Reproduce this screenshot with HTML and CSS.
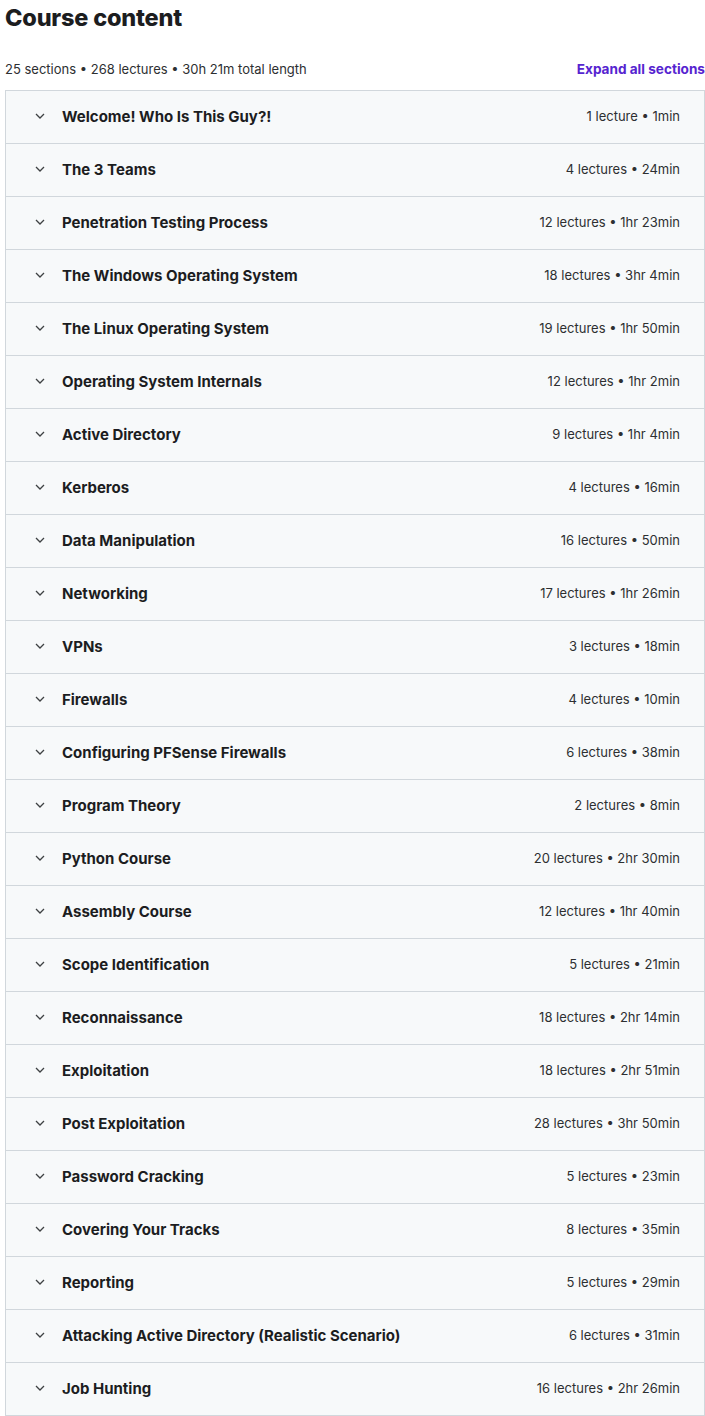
FILE: index.html
```html
<!DOCTYPE html>
<html lang="en">
<head>
    <meta charset="UTF-8">
    <title>Course content</title>
    <link rel="stylesheet" href="styles.css">
</head>
<body>
    <div class="course-content">
        <h2>Course content</h2>
        <div class="content-meta">
            <span>25 sections • 268 lectures • 30h 21m total length</span>
            <button class="expand-all">Expand all sections</button>
        </div>
        <div class="sections">
            <div class="section"><svg class="chevron" viewBox="0 0 12 8"><path d="M2 2 6 6 10 2"/></svg><span class="section-title">Welcome! Who Is This Guy?!</span><span class="section-info">1 lecture • 1min</span></div>
            <div class="section"><svg class="chevron" viewBox="0 0 12 8"><path d="M2 2 6 6 10 2"/></svg><span class="section-title">The 3 Teams</span><span class="section-info">4 lectures • 24min</span></div>
            <div class="section"><svg class="chevron" viewBox="0 0 12 8"><path d="M2 2 6 6 10 2"/></svg><span class="section-title">Penetration Testing Process</span><span class="section-info">12 lectures • 1hr 23min</span></div>
            <div class="section"><svg class="chevron" viewBox="0 0 12 8"><path d="M2 2 6 6 10 2"/></svg><span class="section-title">The Windows Operating System</span><span class="section-info">18 lectures • 3hr 4min</span></div>
            <div class="section"><svg class="chevron" viewBox="0 0 12 8"><path d="M2 2 6 6 10 2"/></svg><span class="section-title">The Linux Operating System</span><span class="section-info">19 lectures • 1hr 50min</span></div>
            <div class="section"><svg class="chevron" viewBox="0 0 12 8"><path d="M2 2 6 6 10 2"/></svg><span class="section-title">Operating System Internals</span><span class="section-info">12 lectures • 1hr 2min</span></div>
            <div class="section"><svg class="chevron" viewBox="0 0 12 8"><path d="M2 2 6 6 10 2"/></svg><span class="section-title">Active Directory</span><span class="section-info">9 lectures • 1hr 4min</span></div>
            <div class="section"><svg class="chevron" viewBox="0 0 12 8"><path d="M2 2 6 6 10 2"/></svg><span class="section-title">Kerberos</span><span class="section-info">4 lectures • 16min</span></div>
            <div class="section"><svg class="chevron" viewBox="0 0 12 8"><path d="M2 2 6 6 10 2"/></svg><span class="section-title">Data Manipulation</span><span class="section-info">16 lectures • 50min</span></div>
            <div class="section"><svg class="chevron" viewBox="0 0 12 8"><path d="M2 2 6 6 10 2"/></svg><span class="section-title">Networking</span><span class="section-info">17 lectures • 1hr 26min</span></div>
            <div class="section"><svg class="chevron" viewBox="0 0 12 8"><path d="M2 2 6 6 10 2"/></svg><span class="section-title">VPNs</span><span class="section-info">3 lectures • 18min</span></div>
            <div class="section"><svg class="chevron" viewBox="0 0 12 8"><path d="M2 2 6 6 10 2"/></svg><span class="section-title">Firewalls</span><span class="section-info">4 lectures • 10min</span></div>
            <div class="section"><svg class="chevron" viewBox="0 0 12 8"><path d="M2 2 6 6 10 2"/></svg><span class="section-title">Configuring PFSense Firewalls</span><span class="section-info">6 lectures • 38min</span></div>
            <div class="section"><svg class="chevron" viewBox="0 0 12 8"><path d="M2 2 6 6 10 2"/></svg><span class="section-title">Program Theory</span><span class="section-info">2 lectures • 8min</span></div>
            <div class="section"><svg class="chevron" viewBox="0 0 12 8"><path d="M2 2 6 6 10 2"/></svg><span class="section-title">Python Course</span><span class="section-info">20 lectures • 2hr 30min</span></div>
            <div class="section"><svg class="chevron" viewBox="0 0 12 8"><path d="M2 2 6 6 10 2"/></svg><span class="section-title">Assembly Course</span><span class="section-info">12 lectures • 1hr 40min</span></div>
            <div class="section"><svg class="chevron" viewBox="0 0 12 8"><path d="M2 2 6 6 10 2"/></svg><span class="section-title">Scope Identification</span><span class="section-info">5 lectures • 21min</span></div>
            <div class="section"><svg class="chevron" viewBox="0 0 12 8"><path d="M2 2 6 6 10 2"/></svg><span class="section-title">Reconnaissance</span><span class="section-info">18 lectures • 2hr 14min</span></div>
            <div class="section"><svg class="chevron" viewBox="0 0 12 8"><path d="M2 2 6 6 10 2"/></svg><span class="section-title">Exploitation</span><span class="section-info">18 lectures • 2hr 51min</span></div>
            <div class="section"><svg class="chevron" viewBox="0 0 12 8"><path d="M2 2 6 6 10 2"/></svg><span class="section-title">Post Exploitation</span><span class="section-info">28 lectures • 3hr 50min</span></div>
            <div class="section"><svg class="chevron" viewBox="0 0 12 8"><path d="M2 2 6 6 10 2"/></svg><span class="section-title">Password Cracking</span><span class="section-info">5 lectures • 23min</span></div>
            <div class="section"><svg class="chevron" viewBox="0 0 12 8"><path d="M2 2 6 6 10 2"/></svg><span class="section-title">Covering Your Tracks</span><span class="section-info">8 lectures • 35min</span></div>
            <div class="section"><svg class="chevron" viewBox="0 0 12 8"><path d="M2 2 6 6 10 2"/></svg><span class="section-title">Reporting</span><span class="section-info">5 lectures • 29min</span></div>
            <div class="section"><svg class="chevron" viewBox="0 0 12 8"><path d="M2 2 6 6 10 2"/></svg><span class="section-title">Attacking Active Directory (Realistic Scenario)</span><span class="section-info">6 lectures • 31min</span></div>
            <div class="section"><svg class="chevron" viewBox="0 0 12 8"><path d="M2 2 6 6 10 2"/></svg><span class="section-title">Job Hunting</span><span class="section-info">16 lectures • 2hr 26min</span></div>
        </div>
    </div>
</body>
</html>
```

FILE: styles.css
```css
* {
    box-sizing: border-box;
}

body {
    margin: 0;
    padding: 0 0 0 5px;
    background-color: #ffffff;
    font-family: Inter, "Liberation Sans", Arial, sans-serif;
    color: #2d2f31;
}

.course-content {
    width: 700px;
}

h2 {
    margin: 0;
    padding-top: 4px;
    font-size: 23.5px;
    line-height: 28px;
    font-weight: 800;
    letter-spacing: -0.2px;
    color: #1c1d1f;
}

.content-meta {
    display: flex;
    justify-content: space-between;
    align-items: center;
    margin-top: 22px;
    height: 30px;
    font-size: 13px;
}

.expand-all {
    padding: 0;
    border: none;
    background: none;
    font-family: inherit;
    font-size: 13.6px;
    font-weight: 700;
    color: #5624d0;
    cursor: pointer;
}

.sections {
    margin-top: 6px;
    border: 1px solid #d1d7dc;
    border-bottom: none;
}

.section {
    display: flex;
    align-items: center;
    height: 53px;
    padding: 0 24px 2px 28px;
    background-color: #f7f9fa;
    border-bottom: 1px solid #d1d7dc;
}

.chevron {
    width: 12px;
    height: 8px;
    fill: none;
    stroke: #3e4143;
    stroke-width: 1.3;
    margin-right: 16px;
}

.section-title {
    flex: 1;
    font-size: 15px;
    font-weight: 700;
    color: #1c1d1f;
}

.section-info {
    font-size: 13px;
    color: #2d2f31;
}
```
